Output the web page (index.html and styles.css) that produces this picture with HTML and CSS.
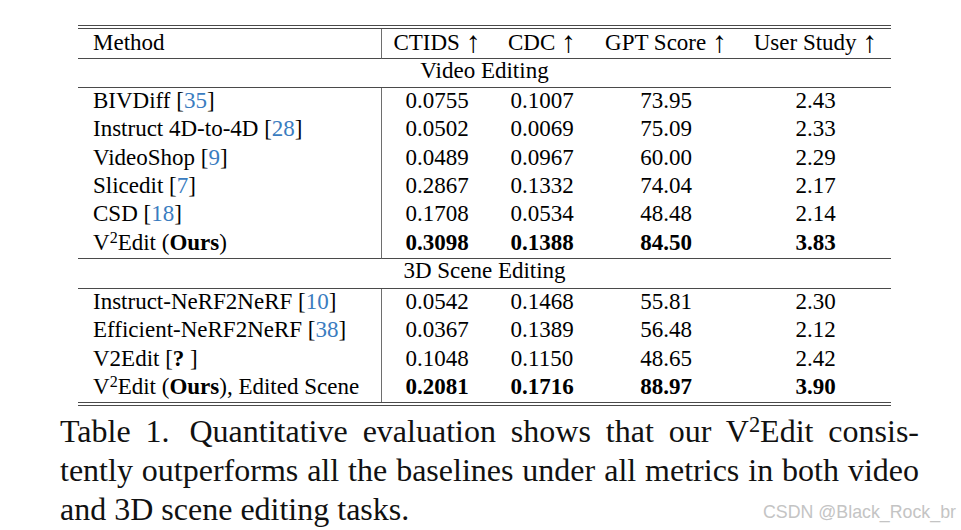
FILE: index.html
```html
<!DOCTYPE html>
<html lang="en">
<head>
<meta charset="utf-8">
<title>Table 1</title>
<link rel="stylesheet" href="styles.css">
</head>
<body>
<div class="page">
  <div class="table-wrap">
    <div class="double-rule"></div>
    <table class="results">
      <colgroup>
        <col class="c-method"><col class="c-ctids"><col class="c-cdc"><col class="c-gpt"><col class="c-user">
      </colgroup>
      <thead>
        <tr class="head">
          <th class="method">Method</th>
          <th>CTIDS <span class="arr">↑</span></th>
          <th>CDC <span class="arr">↑</span></th>
          <th>GPT Score <span class="arr">↑</span></th>
          <th>User Study <span class="arr">↑</span></th>
        </tr>
      </thead>
      <tbody>
        <tr class="section first"><td colspan="5">Video Editing</td></tr>
        <tr><td class="method">BIVDiff [<span class="cite">35</span>]</td><td>0.0755</td><td>0.1007</td><td>73.95</td><td>2.43</td></tr>
        <tr><td class="method">Instruct 4D-to-4D [<span class="cite">28</span>]</td><td>0.0502</td><td>0.0069</td><td>75.09</td><td>2.33</td></tr>
        <tr><td class="method">VideoShop [<span class="cite">9</span>]</td><td>0.0489</td><td>0.0967</td><td>60.00</td><td>2.29</td></tr>
        <tr><td class="method">Slicedit [<span class="cite">7</span>]</td><td>0.2867</td><td>0.1332</td><td>74.04</td><td>2.17</td></tr>
        <tr><td class="method">CSD [<span class="cite">18</span>]</td><td>0.1708</td><td>0.0534</td><td>48.48</td><td>2.14</td></tr>
        <tr class="best end"><td class="method">V<sup>2</sup>Edit (<b>Ours</b>)</td><td>0.3098</td><td>0.1388</td><td>84.50</td><td>3.83</td></tr>
        <tr class="section second"><td colspan="5">3D Scene Editing</td></tr>
        <tr><td class="method">Instruct-NeRF2NeRF [<span class="cite">10</span>]</td><td>0.0542</td><td>0.1468</td><td>55.81</td><td>2.30</td></tr>
        <tr><td class="method">Efficient-NeRF2NeRF [<span class="cite">38</span>]</td><td>0.0367</td><td>0.1389</td><td>56.48</td><td>2.12</td></tr>
        <tr><td class="method">V2Edit [<b>?</b> ]</td><td>0.1048</td><td>0.1150</td><td>48.65</td><td>2.42</td></tr>
        <tr class="best"><td class="method">V<sup>2</sup>Edit (<b>Ours</b>), Edited Scene</td><td>0.2081</td><td>0.1716</td><td>88.97</td><td>3.90</td></tr>
      </tbody>
    </table>
    <div class="double-rule"></div>
  </div>
  <p class="caption">
    <span class="cap-line"><span class="cap-label">Table 1.</span> Quantitative evaluation shows that our V<sup>2</sup>Edit consis-</span>
    <span class="cap-line">tently outperforms all the baselines under all metrics in both video</span>
    <span class="cap-line last">and 3D scene editing tasks.</span>
  </p>
  <div class="watermark">CSDN @Black_Rock_br</div>
</div>
</body>
</html>
```

FILE: styles.css
```css
html, body {
  margin: 0;
  padding: 0;
  background: #ffffff;
}

.page {
  position: relative;
  width: 961px;
  height: 530px;
  padding-top: 25px;
  box-sizing: border-box;
  font-family: "Liberation Serif", "Times New Roman", serif;
  color: #000;
  overflow: hidden;
}

.table-wrap {
  margin-left: 78px;
  width: 813px;
}

.double-rule {
  height: 2px;
  border-top: 1px solid #4a4a4a;
  border-bottom: 1px solid #4a4a4a;
}

.results {
  width: 813px;
  table-layout: fixed;
  border-collapse: separate;
  border-spacing: 0;
  font-size: 23px;
}

.c-method { width: 304px; }
.c-ctids { width: 110px; }
.c-cdc { width: 100px; }
.c-gpt { width: 148px; }
.c-user { width: 151px; }

.results th,
.results td {
  padding: 1px 0 3px;
  line-height: 24.33px;
  text-align: center;
  font-weight: normal;
  white-space: nowrap;
  vertical-align: baseline;
}

.results .method {
  text-align: left;
  padding-left: 15px;
  border-right: 1px solid #6e6e6e;
}

.results .head th {
  line-height: 26px;
  padding: 1px 0 2px;
  border-bottom: 1px solid #4a4a4a;
}

.results .head th.method {
  padding-left: 15px;
}

.arr {
  font-size: 1.3em;
  line-height: 0;
  vertical-align: -0.06em;
}

.results .section td {
  line-height: 23px;
  padding: 0 0 5px;
  border-bottom: 1px solid #4a4a4a;
}

.results .section.second td {
  padding-bottom: 6px;
}

.results .end td {
  border-bottom: 1px solid #4a4a4a;
}

.results .best td {
  font-weight: bold;
}

.results .best td.method {
  font-weight: normal;
}

.results b {
  font-weight: bold;
}

.cite {
  color: #3a7cc0;
}

sup {
  font-size: 0.7em;
  line-height: 0;
  vertical-align: 0.45em;
}

.caption {
  margin: 6px 0 0 60px;
  width: 859px;
  font-size: 32px;
  line-height: 39px;
  color: #111;
}

.cap-line {
  display: block;
  text-align: justify;
  text-align-last: justify;
}

.cap-line.last {
  text-align-last: left;
}

.cap-label {
  margin-right: 5px;
}

.watermark {
  position: absolute;
  left: 763px;
  top: 502px;
  font-family: "Liberation Sans", Arial, sans-serif;
  font-size: 17.8px;
  line-height: 20px;
  color: #c4c4c4;
  white-space: nowrap;
}
```
